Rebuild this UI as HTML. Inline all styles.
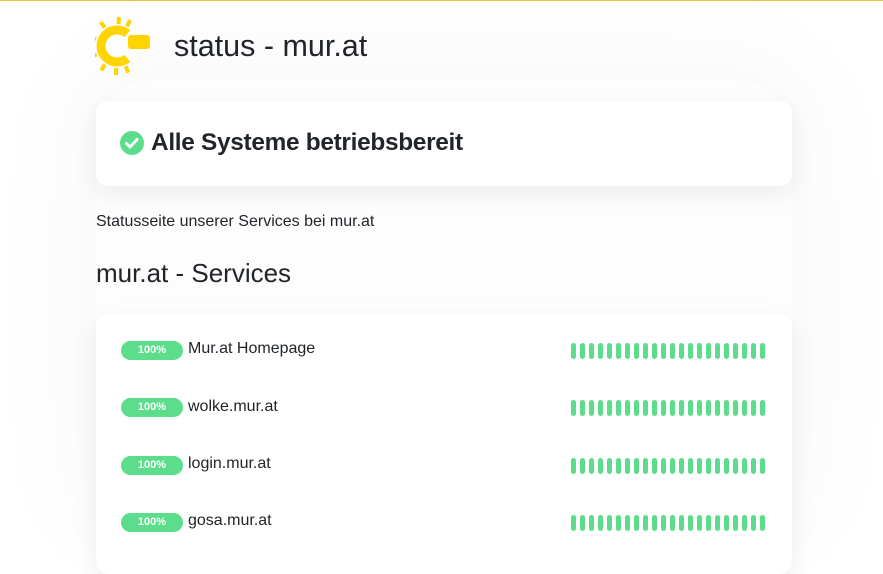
<!DOCTYPE html>
<html><head><meta charset="utf-8"><style>
*{margin:0;padding:0;box-sizing:border-box}
html,body{width:883px;height:528px;overflow:hidden;background:#fff;font-family:"Liberation Sans",sans-serif;color:#212529}
.top{position:absolute;left:0;top:0;width:883px;height:1px;background:#f2c12e}
.glow{position:absolute;left:96px;top:80px;width:696px;height:440px;box-shadow:0 0 90px 40px rgba(0,0,0,.025);background:#fdfdfd;border-radius:60px}
.card{position:absolute;left:96px;width:696px;background:#fff;border-radius:12px;box-shadow:0 8px 24px rgba(0,0,0,.07)}
.t{position:absolute;white-space:nowrap}
.badge{position:absolute;left:121px;width:62px;height:19px;border-radius:10px;background:#5cdd8b;color:#fff;font-size:11px;font-weight:bold;text-align:center;line-height:19px}
.bars{position:absolute;left:571px;display:flex;gap:4px}
.bars i{display:block;width:5px;height:16px;border-radius:3px;background:#5cdd8b}
.name{position:absolute;left:188px;font-size:16px}
</style></head><body>
<div class="top"></div>
<div class="glow"></div>
<svg style="position:absolute;left:95px;top:14px" width="64" height="64" viewBox="0 0 64 64">
<path d="M32.3 19.7 A16 16 0 1 0 32.3 44.3" fill="none" stroke="#ffd400" stroke-width="9"/>
<rect x="33" y="21" width="22" height="14" rx="3" fill="#ffd400"/>
<g stroke="#ffd400" stroke-width="4">
<line x1="22" y1="10" x2="22" y2="3" transform="rotate(4 22 32)"/>
<line x1="22" y1="10" x2="22" y2="3" transform="rotate(27 22 32)"/>
<line x1="22" y1="10" x2="22" y2="3" transform="rotate(-34 22 32)"/>
<line x1="22" y1="10" x2="22" y2="3" transform="rotate(-72 22 32)"/>
<line x1="22" y1="10" x2="22" y2="3" transform="rotate(-113 22 32)"/>
<line x1="22" y1="10" x2="22" y2="3" transform="rotate(-147 22 32)"/>
<line x1="22" y1="10" x2="22" y2="3" transform="rotate(182 22 32)"/>
<line x1="22" y1="10" x2="22" y2="3" transform="rotate(157 22 32)"/>
</g></svg>
<div class="t" style="left:174px;top:29px;font-size:30.5px;font-weight:500">status - mur.at</div>
<div class="card" style="top:101px;height:85px"></div>
<svg style="position:absolute;left:120px;top:131px" width="24" height="24" viewBox="0 0 24 24"><circle cx="12" cy="12" r="12" fill="#5cdd8b"/><path d="M6.5 12.5l3.5 3.5 7-7.5" stroke="#fff" stroke-width="3" fill="none" stroke-linecap="round" stroke-linejoin="round"/></svg>
<div class="t" style="left:151px;top:129px;font-size:24.4px;font-weight:bold;letter-spacing:-0.3px">Alle Systeme betriebsbereit</div>
<div class="t" style="left:96px;top:213px;font-size:16px">Statusseite unserer Services bei mur.at</div>
<div class="t" style="left:96px;top:258px;font-size:26px;font-weight:500">mur.at - Services</div>
<div class="card" style="top:314px;height:260px"></div>
<div class="badge" style="top:341px">100%</div><div class="name" style="top:340px">Mur.at Homepage</div>
<div class="badge" style="top:398px">100%</div><div class="name" style="top:398px">wolke.mur.at</div>
<div class="badge" style="top:456px">100%</div><div class="name" style="top:455px">login.mur.at</div>
<div class="badge" style="top:513px">100%</div><div class="name" style="top:512px">gosa.mur.at</div>
<div class="bars" style="top:343px"><i></i><i></i><i></i><i></i><i></i><i></i><i></i><i></i><i></i><i></i><i></i><i></i><i></i><i></i><i></i><i></i><i></i><i></i><i></i><i></i><i></i><i></i></div>
<div class="bars" style="top:400px"><i></i><i></i><i></i><i></i><i></i><i></i><i></i><i></i><i></i><i></i><i></i><i></i><i></i><i></i><i></i><i></i><i></i><i></i><i></i><i></i><i></i><i></i></div>
<div class="bars" style="top:458px"><i></i><i></i><i></i><i></i><i></i><i></i><i></i><i></i><i></i><i></i><i></i><i></i><i></i><i></i><i></i><i></i><i></i><i></i><i></i><i></i><i></i><i></i></div>
<div class="bars" style="top:515px"><i></i><i></i><i></i><i></i><i></i><i></i><i></i><i></i><i></i><i></i><i></i><i></i><i></i><i></i><i></i><i></i><i></i><i></i><i></i><i></i><i></i><i></i></div>
</body></html>
